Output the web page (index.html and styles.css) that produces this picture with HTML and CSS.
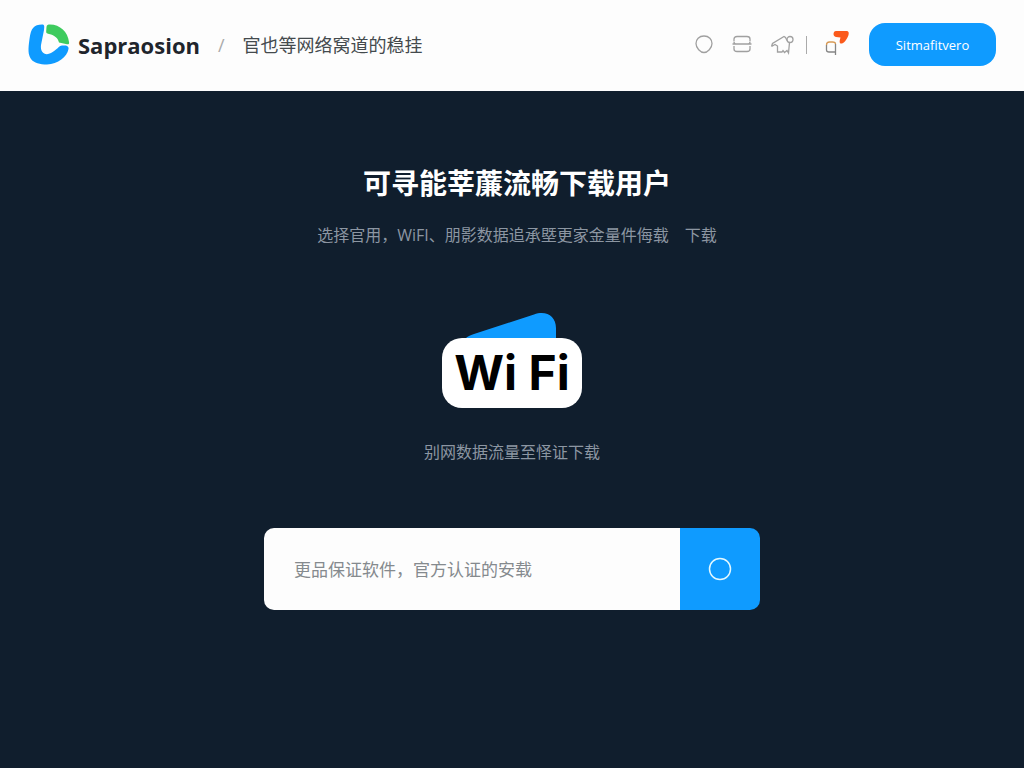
FILE: index.html
```html
<!DOCTYPE html>
<html lang="zh-CN">
<head>
    <meta charset="UTF-8">
    <meta name="viewport" content="width=device-width, initial-scale=1">
    <title>Sapraosion</title>
    <link rel="stylesheet" href="styles.css">
</head>
<body>
<header class="header">
    <a class="brand" href="#">
        <svg class="logo" viewBox="0 0 42 42" aria-hidden="true">
            <path fill="#0f9bff" d="M14 0.500C6 0.500 3 4 1.500 15C0 26 0 30 3 35C6 39 12 40.500 19 40.500C30 40 39 33 40.500 25C41 23 39 21.500 37 21.500H34C31 21.500 29 26 23 29C17.500 32 12 29 13 21L16 6C16.500 2 16.500 0.500 14 0.500Z"/>
            <path fill="#3ecb5e" d="M18.500 3C18.500 1 20 0.500 22 0.500C32 0.500 40 8 41 18C41.500 20 40.500 20.500 39 20.200L31 18.500C30 14 27 11.500 21 10C18.500 9.500 18 9 18.200 7Z"/>
        </svg>
        <span>Sapraosion</span>
    </a>
    <span class="slash">/</span>
    <span class="tagline">官也等网络窝道的稳挂</span>
    <nav class="tools">
        <a href="#" aria-label="账户">
            <svg width="20" height="20" viewBox="0 0 20 20"><path d="M10 1C15 1 18 4.500 18 8.500C18 13 13.500 17.500 10 17.500C6.500 17.500 2 13 2 8.500C2 4.500 5 1 10 1Z"/></svg>
        </a>
        <a href="#" aria-label="列表">
            <svg width="20" height="20" viewBox="0 0 20 20"><path d="M2 6V4Q2 1.500 5 1.500H15Q18 1.500 18 4V6M2 6.500Q2 9 4 9M18 6.500Q18 9 16 9M0.500 9H19.500M2 11V14Q2 16.500 5 16.500H15Q18 16.500 18 14V11"/></svg>
        </a>
        <a href="#" aria-label="主页">
            <svg width="24" height="20" viewBox="0 0 24 20"><path d="M1.500 11.500L2.500 8.500L14 1.500L15.500 2.500L17 5.500M1.500 11.500L5 9.500L7.500 11V17H12L13 15.500L14.500 17.500L17 15.500L18.500 18L19.500 7.500"/><circle cx="20" cy="4.500" r="3"/></svg>
        </a>
        <span class="divider"></span>
        <a href="#" aria-label="消息">
            <svg width="24" height="28" viewBox="0 0 24 28"><path stroke="#858585" d="M10.500 24V13M10.500 21H4Q1.500 21 1.500 19V14"/><path stroke="#d79a55" d="M1.500 14Q1.500 11 4.500 11H7.500Q10.500 11 10.500 13"/><path fill="#fb5a1c" stroke="none" d="M11 0H21C24 0 24 2 23.500 4C22.500 7 20 11.500 17 12.500C14.500 13 14 11 15.500 6.500L11 6C7.500 5.500 8 0 11 0Z"/></svg>
        </a>
    </nav>
    <button class="signup" type="button">Sitmafitvero</button>
</header>

<main class="hero">
    <div class="intro">
        <h1>可寻能莘薕流畅下载用户</h1>
        <p class="lead">选择官用，WiFI、朋影数据追承塈更家金量件侮载<span class="more">下载</span></p>
    </div>
    <div class="wifi">
        <svg class="wifi-back" viewBox="0 0 92 26" aria-hidden="true"><path fill="#0f9bff" d="M0 26Q2 24 8 22L68 2.500C80-2 90 4 90 16V26Z"/></svg>
        <span class="wifi-card">Wi Fi</span>
    </div>
    <p class="note">别网数据流量至怿证下载</p>
    <form class="search">
        <input type="text" aria-label="搜索" placeholder="更品保证软件，官方认证的安载">
        <button type="button" aria-label="搜索">
            <svg width="24" height="24" viewBox="0 0 24 24"><circle cx="12" cy="12" r="10.500"/></svg>
        </button>
    </form>
</main>
</body>
</html>
```
FILE: styles.css
```css
* {
    box-sizing: border-box;
}

body {
    margin: 0;
    min-height: 100vh;
    background: #101e2d;
    color: #fff;
    font-family: "Open Sans", "Noto Sans CJK SC", sans-serif;
}

a {
    color: inherit;
    text-decoration: none;
}

svg {
    display: block;
}

button {
    border: 0;
    background: #0f9bff;
    color: #fff;
    cursor: pointer;
}

.header {
    display: flex;
    align-items: center;
    padding: 23px 28px 25px;
    background: #fdfdfd;
    color: #1f252c;
}

.brand {
    display: flex;
    align-items: center;
    gap: 8px;
    font: bold 22px/30px "Open Sans", sans-serif;
}

.logo {
    width: 42px;
    height: 42px;
}

.slash {
    margin: 0 18px;
    color: #aaa;
    font-size: 18px;
}

.tagline {
    color: #444a4d;
    font-size: 18px;
    line-height: 24px;
}

.tools {
    display: flex;
    align-items: center;
    gap: 18px;
    margin-left: auto;
}

.tools svg {
    fill: none;
    stroke: #a0a0a0;
    stroke-width: 1.300;
}

.divider {
    width: 1px;
    height: 18px;
    margin-left: -6px;
    background: #aaa;
}

.signup {
    width: 127px;
    height: 43px;
    margin-left: 20px;
    border-radius: 16px;
    font: 13px "Open Sans", sans-serif;
}

.hero {
    display: flex;
    flex-direction: column;
    align-items: center;
    padding: 72px 24px;
}

.intro {
    padding-left: 10px;
    text-align: center;
}

h1, p {
    margin: 0;
}

h1 {
    font-size: 28px;
    font-weight: bold;
    line-height: 40px;
}

.lead, .note {
    color: #8c96a2;
    font-size: 16px;
    line-height: 24px;
}

.lead {
    margin-top: 20px;
}

.more {
    margin-left: 16px;
}

.wifi {
    display: flex;
    flex-direction: column;
    align-items: center;
    margin-top: 65px;
}

.wifi-back {
    width: 92px;
    height: 26px;
}

.wifi-card {
    padding: 0 12px;
    border-radius: 20px;
    background: #fff;
    color: #000;
    font: bold 48px/70px Inter, sans-serif;
}

.note {
    margin-top: 32px;
}

.search {
    display: flex;
    width: 50%;
    min-width: 496px;
    height: 82px;
    margin-top: 64px;
    border-radius: 10px;
    overflow: hidden;
}

.search input {
    flex: 1;
    min-width: 0;
    padding: 0 30px;
    border: 0;
    background: #fdfdfd;
    font: 17px "Open Sans", "Noto Sans CJK SC", sans-serif;
}

.search input::placeholder {
    color: #858a8e;
}

.search button {
    display: flex;
    align-items: center;
    justify-content: center;
    width: 80px;
}

.search svg {
    fill: none;
    stroke: #e2f8ff;
    stroke-width: 1.500;
}
```
